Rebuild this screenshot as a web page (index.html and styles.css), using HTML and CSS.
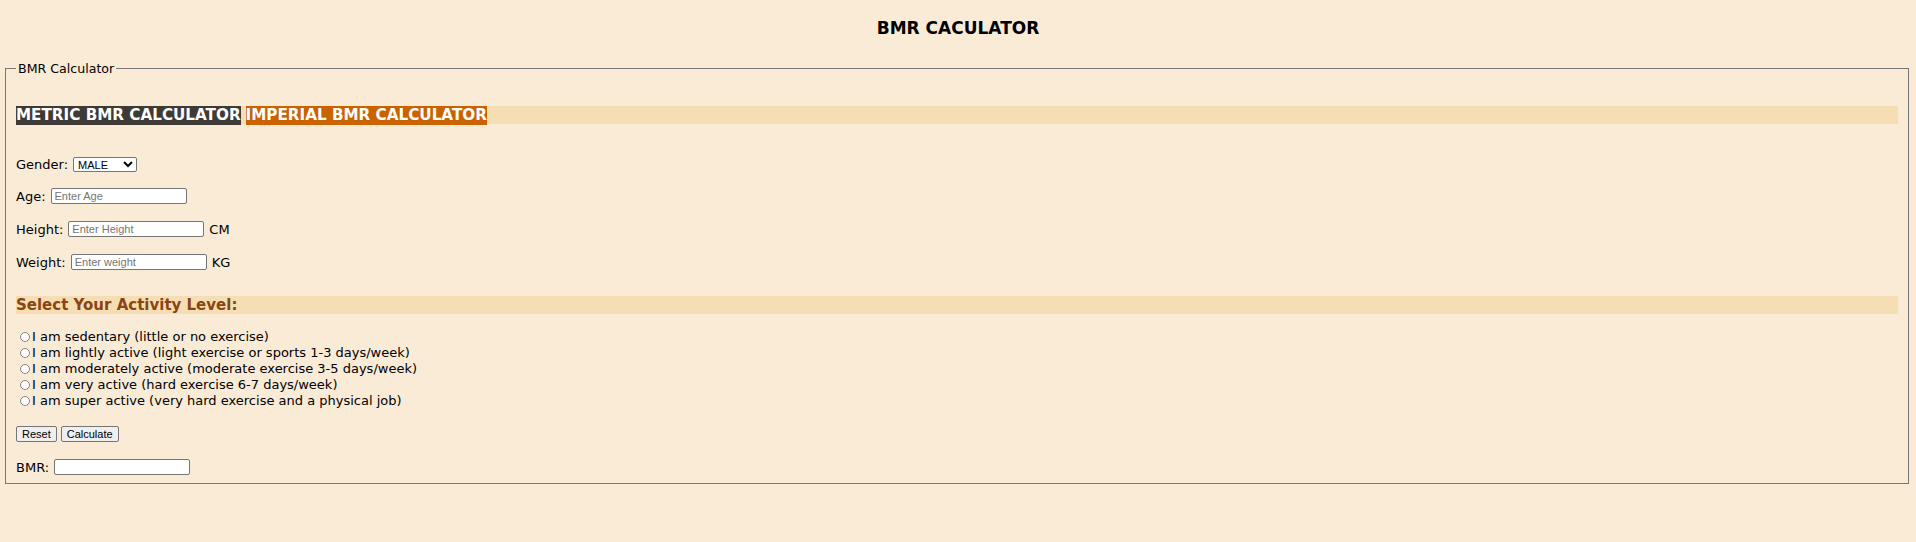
FILE: index.html
```html
<!DOCTYPE html>
<html lang="en">
<head>
<meta charset="utf-8">
<title>BMR Calculator</title>
<link rel="stylesheet" href="styles.css">
</head>
<body>
<h1 class="title">BMR CACULATOR</h1>
<div class="wrap">
  <fieldset class="box">
    <legend class="legend">BMR Calculator</legend>
    <div class="tabs">
      <span class="tab tab-metric">METRIC BMR CALCULATOR</span>
      <span class="tab tab-imperial">IMPERIAL BMR CALCULATOR</span>
    </div>
    <div class="row row-gender">
      <label for="gender">Gender:</label>
      <select id="gender" class="select">
        <option>MALE</option>
        <option>FEMALE</option>
      </select>
    </div>
    <div class="row row-next">
      <label for="age">Age:</label>
      <input id="age" class="field" type="text" placeholder="Enter Age">
    </div>
    <div class="row row-next2">
      <label for="height">Height:</label>
      <input id="height" class="field" type="text" placeholder="Enter Height">
      <span>CM</span>
    </div>
    <div class="row row-next2">
      <label for="weight">Weight:</label>
      <input id="weight" class="field" type="text" placeholder="Enter weight">
      <span>KG</span>
    </div>
    <h2 class="section">Select Your Activity Level:</h2>
    <div class="radios">
      <label class="radio"><input type="radio" name="act"><span>I am sedentary (little or no exercise)</span></label>
      <label class="radio"><input type="radio" name="act"><span>I am lightly active (light exercise or sports 1-3 days/week)</span></label>
      <label class="radio"><input type="radio" name="act"><span>I am moderately active (moderate exercise 3-5 days/week)</span></label>
      <label class="radio"><input type="radio" name="act"><span>I am very active (hard exercise 6-7 days/week)</span></label>
      <label class="radio"><input type="radio" name="act"><span>I am super active (very hard exercise and a physical job)</span></label>
    </div>
    <div class="row row-buttons">
      <button class="btn" type="button">Reset</button>
      <button class="btn" type="button">Calculate</button>
    </div>
    <div class="row row-result">
      <label for="bmr">BMR:</label>
      <input id="bmr" class="field" type="text">
    </div>
  </fieldset>
</div>
</body>
</html>
```
FILE: styles.css
```css
html, body {
  margin: 0;
  padding: 0;
}
body {
  background: #faebd7;
  font-family: "DejaVu Sans", Verdana, sans-serif;
  font-size: 13px;
  color: #000;
}
.title {
  margin: 0;
  padding-top: 18px;
  height: 20px;
  line-height: 20px;
  font-family: "Comic Sans MS", "DejaVu Sans", sans-serif;
  font-size: 17px;
  font-weight: bold;
  text-align: center;
}
.wrap {
  padding: 23px 7px 0 5px;
}
.box {
  margin: 0;
  border: 1px solid #777;
  padding: 0 10px 8px 10px;
  min-width: 0;
}
.legend {
  padding: 0 2px;
  font-size: 12.6px;
  line-height: 15px;
}
.tabs {
  margin-top: 30px;
  height: 18px;
  background: #f5deb3;
  display: flex;
  align-items: center;
  gap: 5px;
}
.tab {
  font-size: 15.2px;
  font-weight: bold;
  line-height: 19px;
  color: #fff;
}
.tab-metric {
  background: #3e3a35;
}
.tab-imperial {
  background: #cb6200;
}
.row {
  display: flex;
  align-items: center;
  gap: 5px;
  height: 16px;
}
.row-gender { margin-top: 32px; }
.row-next { margin-top: 16px; }
.row-next2 { margin-top: 17px; }
.row-buttons { margin-top: 17px; gap: 4px; }
.row-result { margin-top: 17px; }
.select {
  width: 64px;
  height: 15px;
  font-family: "Liberation Sans", Arial, sans-serif;
  font-size: 11px;
  padding: 0;
  border: 1px solid #767676;
  border-radius: 2px;
  background: #fff;
  color: #000;
}
.field {
  box-sizing: border-box;
  width: 136px;
  height: 16px;
  margin: 0;
  padding: 1px 3px;
  border: 1px solid #767676;
  border-radius: 2px;
  background: #fff;
  font-family: "Liberation Sans", Arial, sans-serif;
  font-size: 11px;
}
.field::placeholder {
  color: #757575;
}
.section {
  margin: 26px 0 0 0;
  height: 18px;
  line-height: 18px;
  background: #f5deb3;
  color: #8b4513;
  font-size: 15px;
  font-weight: bold;
}
.radios {
  margin-top: 15px;
  display: flex;
  flex-direction: column;
}
.radio {
  display: flex;
  align-items: center;
  height: 16px;
  line-height: 16px;
}
.radio input {
  appearance: none;
  -webkit-appearance: none;
  box-sizing: border-box;
  width: 10px;
  height: 10px;
  margin: 0 2px 0 4px;
  border: 1px solid #858585;
  border-radius: 50%;
  background: #fff;
}
.btn {
  box-sizing: border-box;
  height: 16px;
  margin: 0;
  padding: 0 5px;
  border: 1px solid #767676;
  border-radius: 2px;
  background: #efefef;
  color: #000;
  font-family: "Liberation Sans", Arial, sans-serif;
  font-size: 11px;
  line-height: 14px;
}
```
